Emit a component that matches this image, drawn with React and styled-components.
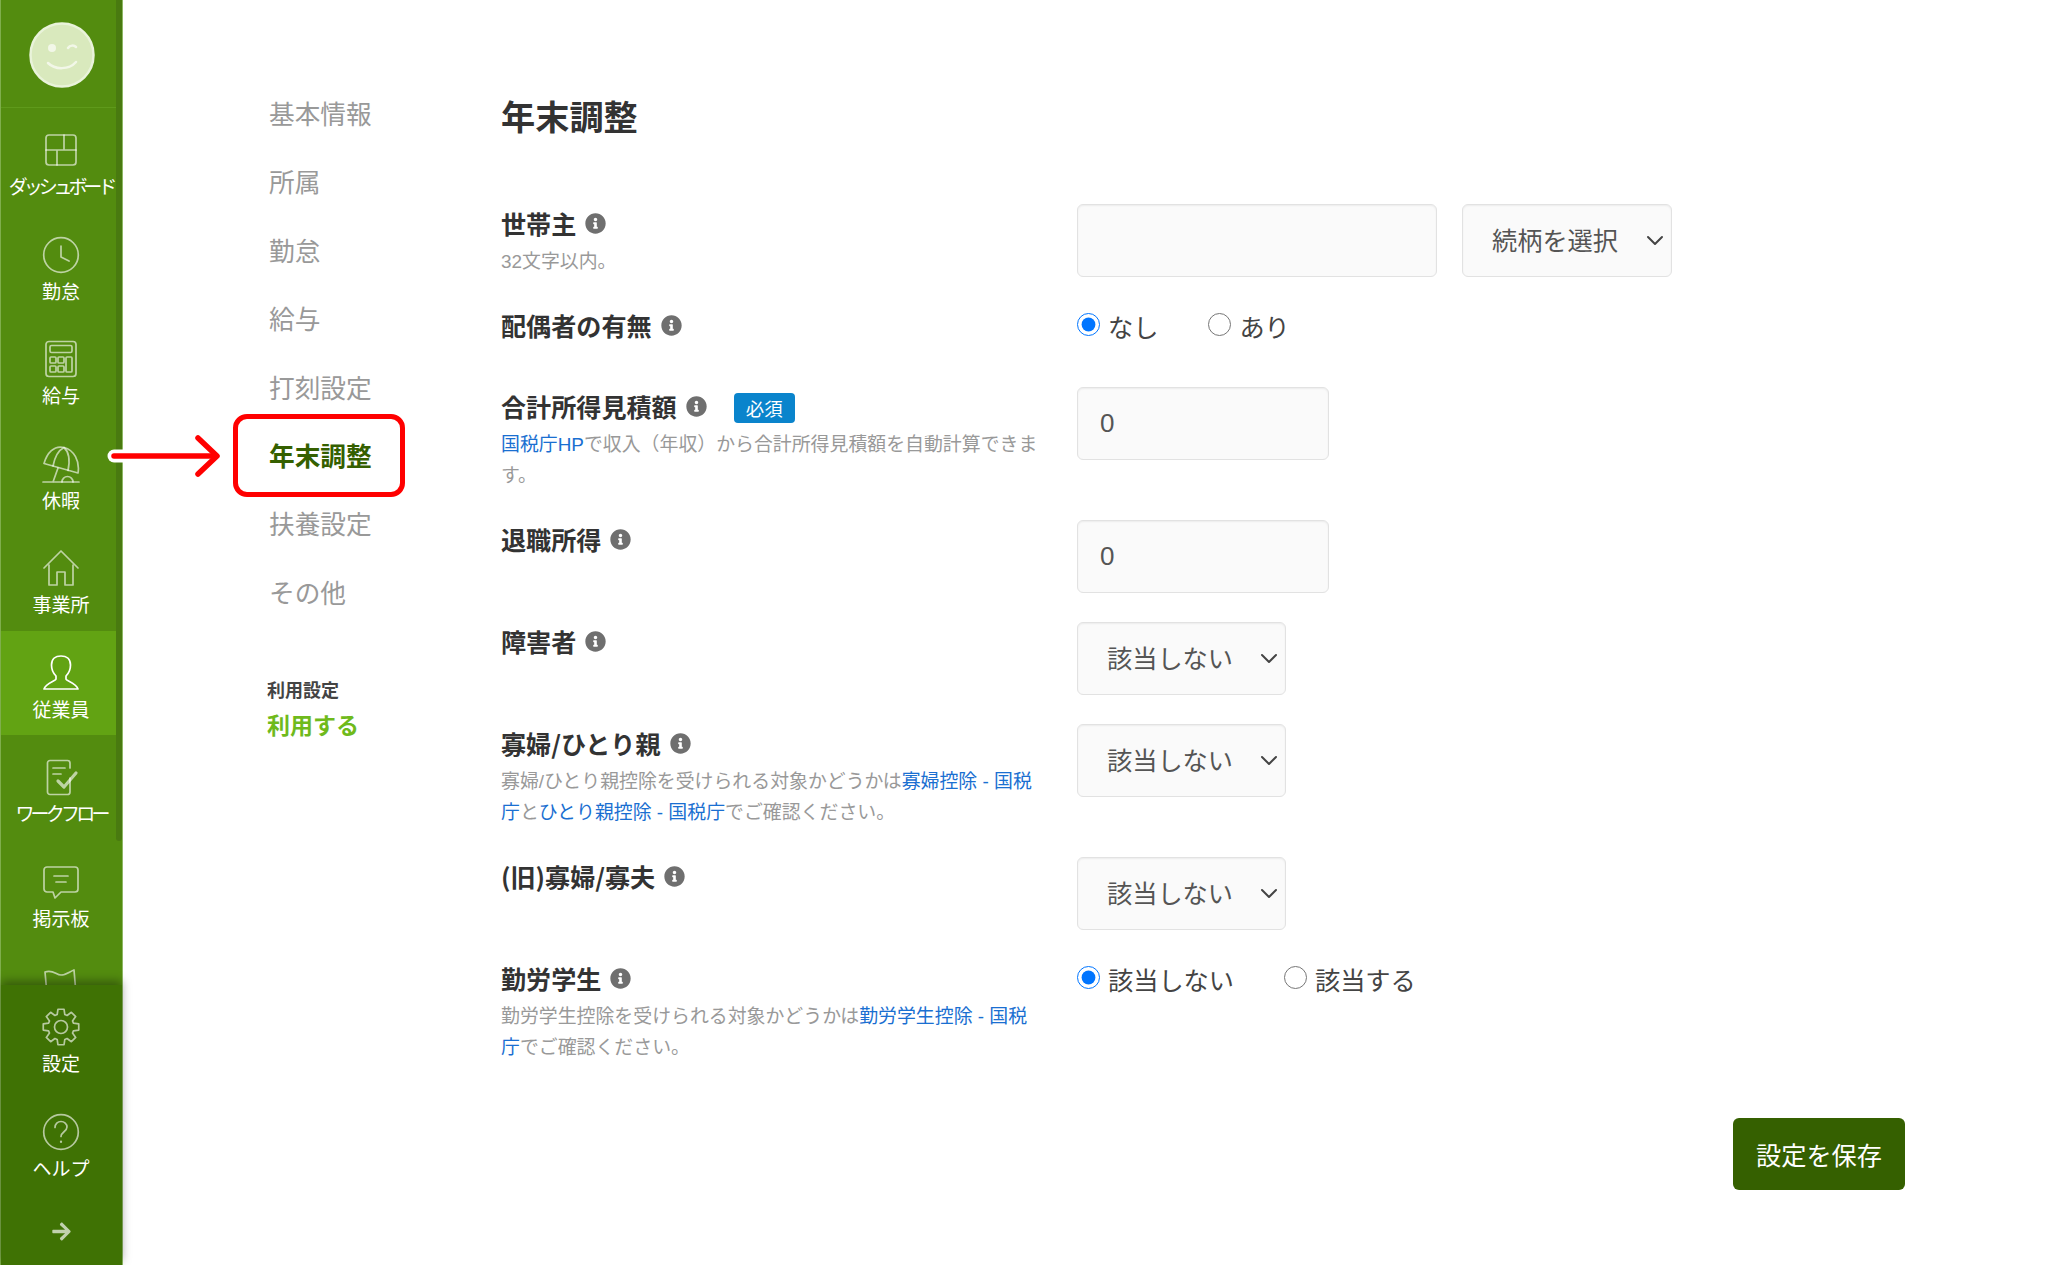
import React from 'react';
import styled, { createGlobalStyle } from 'styled-components';
import { FaInfoCircle, FaArrowRight } from 'react-icons/fa';

const FONT = '"Liberation Sans", "Noto Sans CJK JP", sans-serif';
const CJK_FIRST = '"Noto Sans CJK JP", "Liberation Sans", sans-serif';

const Global = createGlobalStyle`
  html, body { margin: 0; padding: 0; background: #fff; }
  body { font-family: ${FONT}; color: #333; }
  * { box-sizing: border-box; }
`;

const Page = styled.div`
  position: relative;
  display: flex;
  width: 2048px;
  height: 1265px;
  overflow: hidden;
  background: #fff;
`;

/* ---------- sidebar ---------- */
const Sidebar = styled.aside`
  position: relative;
  flex: 0 0 123px;
  display: flex;
  flex-direction: column;
  height: 1265px;
  background: #538c0f;
  border-left: 1px solid #7fae4c;
  border-right: 1px solid #8db763;
`;
const SideHeader = styled.div`
  flex: 0 0 108px;
  display: flex;
  align-items: center;
  justify-content: center;
  padding-top: 2px;
  border-bottom: 1px solid #5f9a1b;
`;
const Avatar = styled.svg`
  width: 66px;
  height: 66px;
  display: block;
`;
const SideScroll = styled.div`
  flex: 1;
  min-height: 0;
  overflow: hidden;
`;
const Thumb = styled.div`
  position: absolute;
  top: 0;
  right: 0;
  width: 6px;
  height: 841px;
  border-radius: 0 0 3px 3px;
  background: #497a10;
`;
const SideBottom = styled.div`
  position: relative;
  z-index: 2;
  flex: 0 0 280px;
  display: flex;
  flex-direction: column;
  background: #3f7204;
  box-shadow: 0 -4px 9px rgba(0, 0, 0, 0.35);
`;
const SideItem = styled.div`
  height: 104.5px;
  width: 115px;
  display: flex;
  flex-direction: column;
  align-items: center;
  padding: 23px 0 0 5px;
  background: ${p => (p.$active ? '#62a313' : 'transparent')};
`;
const SideIcon = styled.svg`
  flex: none;
  width: 38px;
  height: 38px;
  display: block;
  fill: none;
  stroke: ${p => (p.$active ? '#fff' : 'rgba(255,255,255,0.62)')};
  stroke-width: 1.7;
  stroke-linecap: round;
  stroke-linejoin: round;
`;
const SideLabel = styled.span`
  margin-top: 7px;
  font-size: 19px;
  line-height: 24px;
  color: #fff;
  white-space: nowrap;
  letter-spacing: ${p => p.$tight || 0}px;
`;
const ArrowRow = styled.div`
  flex: 1;
  display: flex;
  align-items: center;
  justify-content: center;
  padding-top: 3px;
  color: rgba(255, 255, 255, 0.68);
  font-size: 21px;
`;

/* ---------- sub navigation ---------- */
const SubNav = styled.nav`
  flex: 0 0 378px;
  padding: 81px 0 0 146px;
`;
const SubItem = styled.div`
  position: relative;
  height: 68.4px;
  line-height: 68.4px;
  font-size: 25.7px;
  white-space: nowrap;
  color: ${p => (p.$active ? '#356000' : '#999')};
  font-weight: ${p => (p.$active ? 700 : 400)};
`;
const Highlight = styled.span`
  position: absolute;
  left: -36px;
  top: -9px;
  width: 172px;
  height: 83px;
  border: 5px solid #f00;
  border-radius: 14px;
`;
const UseBlock = styled.div`
  margin: 49px 0 0 -2px;
`;
const UseTitle = styled.div`
  font-size: 18px;
  line-height: 28px;
  font-weight: 700;
  color: #444;
`;
const UseValue = styled.div`
  margin-top: 5px;
  font-size: 23px;
  line-height: 32px;
  font-weight: 700;
  color: #6fba1c;
`;
const ArrowSvg = styled.svg`
  position: absolute;
  left: 100px;
  top: 426px;
  width: 130px;
  height: 60px;
  fill: none;
  stroke-linecap: round;
  stroke-linejoin: round;
`;

/* ---------- main ---------- */
const Main = styled.main`
  flex: 1;
  min-width: 0;
  padding: 0 143px 0 0;
  display: flex;
  flex-direction: column;
`;
const Title = styled.h1`
  margin: 93px 0 0;
  height: 111px;
  font-size: 34.2px;
  line-height: 50px;
  font-weight: 700;
  color: #333;
`;
const Form = styled.div`
  display: flex;
  flex-direction: column;
  gap: 29px;
`;
const Row = styled.div`
  display: grid;
  grid-template-columns: 541px 1fr;
  column-gap: 35px;
  min-height: ${p => p.$min || 0}px;
`;
const LabelCol = styled.div`
  min-width: 0;
`;
const LabelLine = styled.div`
  display: flex;
  align-items: center;
  height: 38px;
  font-family: ${CJK_FIRST};
  font-size: 25.1px;
  font-weight: 700;
  color: #333;
  white-space: nowrap;
`;
const Info = styled(FaInfoCircle)`
  margin-left: 9px;
  width: 21px;
  height: 21px;
  color: #6f6f6f;
`;
const Badge = styled.span`
  margin: 3px 0 0 27px;
  width: 61px;
  height: 30px;
  display: flex;
  align-items: center;
  justify-content: center;
  border-radius: 4px;
  background: #0a84cc;
  color: #fff;
  font-size: 18.4px;
  font-weight: 400;
`;
const Help = styled.p`
  margin: 4px 0 0;
  font-size: 18.9px;
  line-height: 31px;
  color: #999;
`;
const Link = styled.a`
  color: #1a6fd1;
  text-decoration: none;
`;
const ControlRow = styled.div`
  display: flex;
  gap: 25px;
`;
const TextInput = styled.input`
  display: block;
  width: ${p => p.$w}px;
  height: 73px;
  padding: 0 22px;
  border: 1px solid #e2e2e2;
  border-radius: 6px;
  background: #fafafa;
  box-shadow: inset 0 1px 2px rgba(0, 0, 0, 0.06);
  font: 26px ${FONT};
  color: #555;
  outline: none;
`;
const SelectWrap = styled.div`
  position: relative;
  width: ${p => p.$w}px;
  height: 73px;
`;
const Select = styled.select`
  appearance: none;
  display: block;
  width: 100%;
  height: 100%;
  padding: 0 0 0 29px;
  border: 1px solid #e2e2e2;
  border-radius: 6px;
  background: #fafafa;
  box-shadow: inset 0 1px 2px rgba(0, 0, 0, 0.06);
  font: 25.2px ${FONT};
  color: #555;
  outline: none;
`;
const Chevron = styled.svg`
  position: absolute;
  right: 8px;
  top: 30px;
  width: 18px;
  height: 12px;
  fill: none;
  stroke: #444;
  stroke-width: 2;
  stroke-linecap: round;
  stroke-linejoin: round;
  pointer-events: none;
`;
const RadioGroup = styled.div`
  display: flex;
  align-items: center;
  height: 40px;
  gap: 50px;
`;
const RadioLabel = styled.label`
  display: flex;
  align-items: center;
  font-size: 25.2px;
  color: #444;
  white-space: nowrap;
`;
const Radio = styled.input.attrs({ type: 'radio' })`
  width: 23px;
  height: 23px;
  margin: -4px 8px 0 0;
  accent-color: #0075ff;
`;
const Footer = styled.div`
  display: flex;
  justify-content: flex-end;
  margin-top: 55px;
`;
const SaveButton = styled.button`
  width: 172px;
  height: 72px;
  border: 0;
  border-radius: 6px;
  background: #356000;
  color: #fff;
  font: 25.2px ${FONT};
`;

/* ---------- icons ---------- */
const gearPath = (() => {
  const pts = [];
  const cx = 19;
  const cy = 19;
  for (let i = 0; i < 8; i += 1) {
    const a = (i * Math.PI) / 4 - Math.PI / 2;
    const p = (r, d) => `${(cx + r * Math.cos(a + d)).toFixed(2)} ${(cy + r * Math.sin(a + d)).toFixed(2)}`;
    pts.push(p(13, -0.3), p(18, -0.17), p(18, 0.17), p(13, 0.3));
  }
  return `M${pts.join('L')}Z`;
})();

const icons = {
  dash: (
    <>
      <rect x="4" y="4" width="30" height="30" rx="3" />
      <path d="M4 19h30M22 4v15M15 19v15" />
    </>
  ),
  clock: (
    <>
      <circle cx="19" cy="19" r="17.3" />
      <path d="M19 10v11l8 4" />
    </>
  ),
  calc: (
    <>
      <rect x="4" y="1.500" width="30" height="35" rx="3" />
      <rect x="8" y="5.500" width="22" height="7" rx="1.500" />
      <rect x="8" y="17" width="6" height="6" rx="1" />
      <rect x="16" y="17" width="6" height="6" rx="1" />
      <rect x="24" y="17" width="6" height="15" rx="1" />
      <rect x="8" y="26" width="6" height="6" rx="1" />
      <rect x="16" y="26" width="6" height="6" rx="1" />
    </>
  ),
  umbrella: (
    <>
      <path d="M2 18.500L36 28C38 16 32 5 22 2.500 12 0 5 8 2 18.500z" />
      <path d="M11 21C13 11 17 5 22 2.500 27 7 28 16 26 25.500" />
      <path d="M16 23l-5 14M1 37h36" />
      <path d="M20 37a5.500 5.500 0 0 1 11 0" />
    </>
  ),
  house: (
    <>
      <path d="M2 19L19 2l17 17" />
      <path d="M7 16v20h8V23h8v13h8V16" />
    </>
  ),
  user: (
    <path d="M14 22c-3-3-4.500-7-4.500-11C9.500 5 13.500 2 19 2s9.500 3 9.500 9c0 4-1.500 8-4.500 11v3c0 2 10 4 12 10H2c2-6 12-8 12-10z" />
  ),
  flow: (
    <>
      <path d="M28 20v14a2.500 2.500 0 0 1-2.500 2.500H8A2.500 2.500 0 0 1 5.500 34V5A2.500 2.500 0 0 1 8 2.500h17.500A2.500 2.500 0 0 1 28 5v5" />
      <path d="M11 10h12M11 16h8" />
      <path d="M16 23l6 6L34 15" strokeWidth="3.200" />
    </>
  ),
  chat: (
    <>
      <path d="M5 4h28a3 3 0 0 1 3 3v19a3 3 0 0 1-3 3H19l-6 6-2-6H5a3 3 0 0 1-3-3V7a3 3 0 0 1 3-3z" />
      <path d="M12 13h14M14 19h10" />
    </>
  ),
  flag: <path d="M6 38L3 5c8-3 11 3 16 3s8-3 13-5l3 35" />,
  gear: (
    <>
      <circle cx="19" cy="19" r="6.500" />
      <path d={gearPath} />
    </>
  ),
  help: (
    <>
      <circle cx="19" cy="19" r="17.300" />
      <path d="M13 14.500c0-3.500 2.700-6 6-6s6 2.300 6 5.500c0 4.500-6 5-6 9.500" />
      <path d="M19 28.500v.5" strokeWidth="2.200" />
    </>
  ),
};

const Icon = ({ name, active }) => (
  <SideIcon viewBox="0 0 38 38" $active={active}>
    {icons[name]}
  </SideIcon>
);

const NavEntry = ({ icon, label, active, tight }) => (
  <SideItem $active={active}>
    <Icon name={icon} active={active} />
    {label && <SideLabel $tight={tight}>{label}</SideLabel>}
  </SideItem>
);

const ChevronDown = () => (
  <Chevron viewBox="0 0 18 12">
    <path d="M2 3l7 7 7-7" />
  </Chevron>
);

const DropDown = ({ w, text }) => (
  <SelectWrap $w={w}>
    <Select defaultValue={text}>
      <option>{text}</option>
    </Select>
    <ChevronDown />
  </SelectWrap>
);

const subItems = ['基本情報', '所属', '勤怠', '給与', '打刻設定', '年末調整', '扶養設定', 'その他'];

export default function App() {
  return (
    <Page>
      <Global />
      <Sidebar>
        <SideHeader>
          <Avatar viewBox="0 0 66 66">
            <circle cx="33" cy="33" r="31.500" fill="#d9e9bd" stroke="#e9f3da" strokeWidth="2.500" />
            <circle cx="23" cy="26" r="4" fill="#f2f7e8" />
            <path d="M39 26c2-3 6-3 8-1" fill="none" stroke="#f2f7e8" strokeWidth="2.500" strokeLinecap="round" />
            <path d="M19 41c7 7 21 7 28-1" fill="none" stroke="#f2f7e8" strokeWidth="2.500" strokeLinecap="round" />
          </Avatar>
        </SideHeader>
        <SideScroll>
          <NavEntry icon="dash" label="ダッシュボード" tight={-4.1} />
          <NavEntry icon="clock" label="勤怠" />
          <NavEntry icon="calc" label="給与" />
          <NavEntry icon="umbrella" label="休暇" />
          <NavEntry icon="house" label="事業所" />
          <NavEntry icon="user" label="従業員" active />
          <NavEntry icon="flow" label="ワークフロー" tight={-3.8} />
          <NavEntry icon="chat" label="掲示板" />
          <NavEntry icon="flag" />
        </SideScroll>
        <Thumb />
        <SideBottom>
          <NavEntry icon="gear" label="設定" />
          <NavEntry icon="help" label="ヘルプ" />
          <ArrowRow>
            <FaArrowRight />
          </ArrowRow>
        </SideBottom>
      </Sidebar>

      <SubNav>
        {subItems.map(t => (
          <SubItem key={t} $active={t === '年末調整'}>
            {t}
            {t === '年末調整' && <Highlight />}
          </SubItem>
        ))}
        <UseBlock>
          <UseTitle>利用設定</UseTitle>
          <UseValue>利用する</UseValue>
        </UseBlock>
      </SubNav>

      <Main>
        <Title>年末調整</Title>
        <Form>
          <Row>
            <LabelCol>
              <LabelLine>世帯主<Info /></LabelLine>
              <Help>32文字以内。</Help>
            </LabelCol>
            <ControlRow>
              <TextInput $w={360} readOnly />
              <DropDown w={210} text="続柄を選択" />
            </ControlRow>
          </Row>
          <Row $min={52}>
            <LabelCol>
              <LabelLine>配偶者の有無<Info /></LabelLine>
            </LabelCol>
            <RadioGroup>
              <RadioLabel><Radio name="spouse" defaultChecked />なし</RadioLabel>
              <RadioLabel><Radio name="spouse" />あり</RadioLabel>
            </RadioGroup>
          </Row>
          <Row>
            <LabelCol>
              <LabelLine>合計所得見積額<Info /><Badge>必須</Badge></LabelLine>
              <Help><Link>国税庁HP</Link>で収入（年収）から合計所得見積額を自動計算できます。</Help>
            </LabelCol>
            <TextInput $w={252} readOnly value="0" />
          </Row>
          <Row $min={73}>
            <LabelCol>
              <LabelLine>退職所得<Info /></LabelLine>
            </LabelCol>
            <TextInput $w={252} readOnly value="0" />
          </Row>
          <Row>
            <LabelCol>
              <LabelLine>障害者<Info /></LabelLine>
            </LabelCol>
            <DropDown w={209} text="該当しない" />
          </Row>
          <Row>
            <LabelCol>
              <LabelLine>寡婦/ひとり親<Info /></LabelLine>
              <Help>寡婦/ひとり親控除を受けられる対象かどうかは<Link>寡婦控除 - 国税庁</Link>と<Link>ひとり親控除 - 国税庁</Link>でご確認ください。</Help>
            </LabelCol>
            <DropDown w={209} text="該当しない" />
          </Row>
          <Row>
            <LabelCol>
              <LabelLine>(旧)寡婦/寡夫<Info /></LabelLine>
            </LabelCol>
            <DropDown w={209} text="該当しない" />
          </Row>
          <Row>
            <LabelCol>
              <LabelLine>勤労学生<Info /></LabelLine>
              <Help>勤労学生控除を受けられる対象かどうかは<Link>勤労学生控除 - 国税庁</Link>でご確認ください。</Help>
            </LabelCol>
            <RadioGroup>
              <RadioLabel><Radio name="student" defaultChecked />該当しない</RadioLabel>
              <RadioLabel><Radio name="student" />該当する</RadioLabel>
            </RadioGroup>
          </Row>
        </Form>
        <Footer>
          <SaveButton>設定を保存</SaveButton>
        </Footer>
      </Main>

      <ArrowSvg viewBox="0 0 130 60">
        <path d="M14 30H40" stroke="#fff" strokeWidth="13" />
        <path d="M14 30H116" stroke="#f00" strokeWidth="5.500" />
        <path d="M98 12l19 18-19 18" stroke="#f00" strokeWidth="5.500" />
      </ArrowSvg>
    </Page>
  );
}
